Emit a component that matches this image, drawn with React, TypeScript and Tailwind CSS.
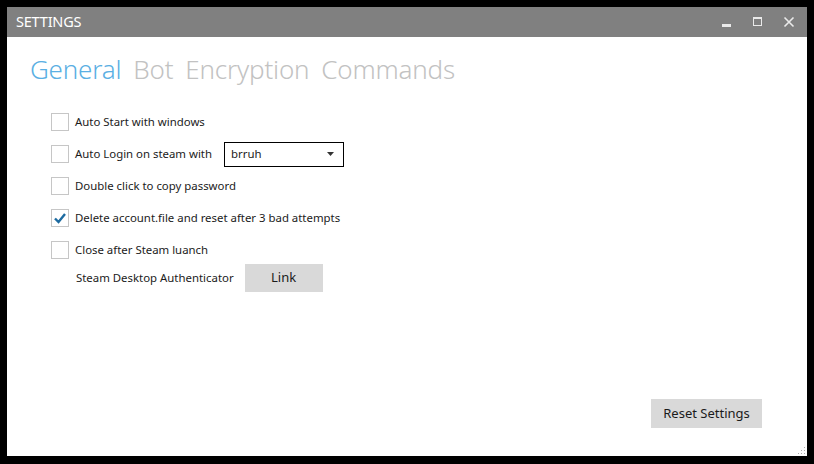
import React from "react";

const font = { fontFamily: '"Noto Sans", "Open Sans", sans-serif' };

function Box({ checked }: { checked?: boolean }) {
  return (
    <div className="w-[18px] h-[18px] border border-[#c6c6c6] bg-white flex items-center justify-center shrink-0">
      {checked && (
        <svg width="14" height="14" viewBox="0 0 14 14">
          <path d="M2 7.5 L5.5 11 L12 3" fill="none" stroke="#1c6aa0" strokeWidth="2.4" />
        </svg>
      )}
    </div>
  );
}

function Row({ label, checked, children }: { label: string; checked?: boolean; children?: React.ReactNode }) {
  return (
    <div className="flex items-center h-[32px]">
      <Box checked={checked} />
      <span className="ml-[6px] text-[11.4px] text-[#1b1b1b]">{label}</span>
      {children}
    </div>
  );
}

export default function App() {
  return (
    <div className="w-[814px] h-[464px] bg-black pt-[7px] pl-[7px] overflow-hidden" style={font}>
      <div className="w-[800px] h-[449px] bg-white flex flex-col relative">
        <div className="h-[30px] bg-[#808080] flex items-center pl-[9px] pr-[12px]">
          <span className="text-white text-[14.5px] tracking-[-0.2px]">SETTINGS</span>
          <div className="ml-auto flex items-center gap-[19px]">
            <svg width="12" height="12" viewBox="0 0 12 12"><rect x="1" y="8" width="9" height="3" fill="#eaeaea" /></svg>
            <svg width="12" height="12" viewBox="0 0 12 12"><rect x="1.5" y="1.5" width="8" height="8" fill="none" stroke="#eaeaea" strokeWidth="1" /><rect x="1" y="1" width="9" height="2" fill="#eaeaea" /></svg>
            <svg width="12" height="12" viewBox="0 0 12 12"><path d="M1.5 1.5 L10.5 10.5 M10.5 1.5 L1.5 10.5" stroke="#eaeaea" strokeWidth="1.6" /></svg>
          </div>
        </div>
        <div className="flex items-baseline gap-[12px] pl-[23px] pt-[14px] text-[26px] font-light leading-[36px] tracking-[-0.2px]">
          <span className="text-[#5aafe3]">General</span>
          <span className="text-[#c2c2c2]">Bot</span>
          <span className="text-[#c2c2c2]">Encryption</span>
          <span className="text-[#c2c2c2]">Commands</span>
        </div>
        <div className="pl-[44px] pt-[19px] flex flex-col">
          <Row label="Auto Start with windows" />
          <Row label="Auto Login on steam with">
            <div className="ml-[12px] w-[120px] h-[25px] border border-black flex items-center pl-[6px] pr-[9px] text-[11.4px] text-[#1b1b1b]">
              <span>brruh</span>
              <svg className="ml-auto" width="7" height="4" viewBox="0 0 7 4"><path d="M0 0 L7 0 L3.5 4 Z" fill="#333" /></svg>
            </div>
          </Row>
          <Row label="Double click to copy password" />
          <Row label="Delete account.file and reset after 3 bad attempts" checked />
          <Row label="Close after Steam luanch" />
          <div className="flex items-center mt-[-2px]">
            <span className="ml-[25px] text-[11.4px] text-[#1b1b1b]">Steam Desktop Authenticator</span>
            <button className="ml-[11px] w-[78px] h-[28px] bg-[#d9d9d9] text-[13px] text-[#1b1b1b]">Link</button>
          </div>
        </div>
        <div className="flex-1" />
        <div className="flex justify-end pr-[45px] pb-[28px]">
          <button className="w-[111px] h-[29px] bg-[#d9d9d9] text-[13px] text-[#1b1b1b]">Reset Settings</button>
        </div>
        <svg className="absolute right-[1px] bottom-[1px]" width="10" height="10" viewBox="0 0 10 10">
          {[[8, 2], [8, 5], [5, 5], [8, 8], [5, 8], [2, 8]].map(([x, y], i) => (
            <rect key={i} x={x} y={y} width="1" height="1" fill="#aaa" />
          ))}
        </svg>
      </div>
    </div>
  );
}
